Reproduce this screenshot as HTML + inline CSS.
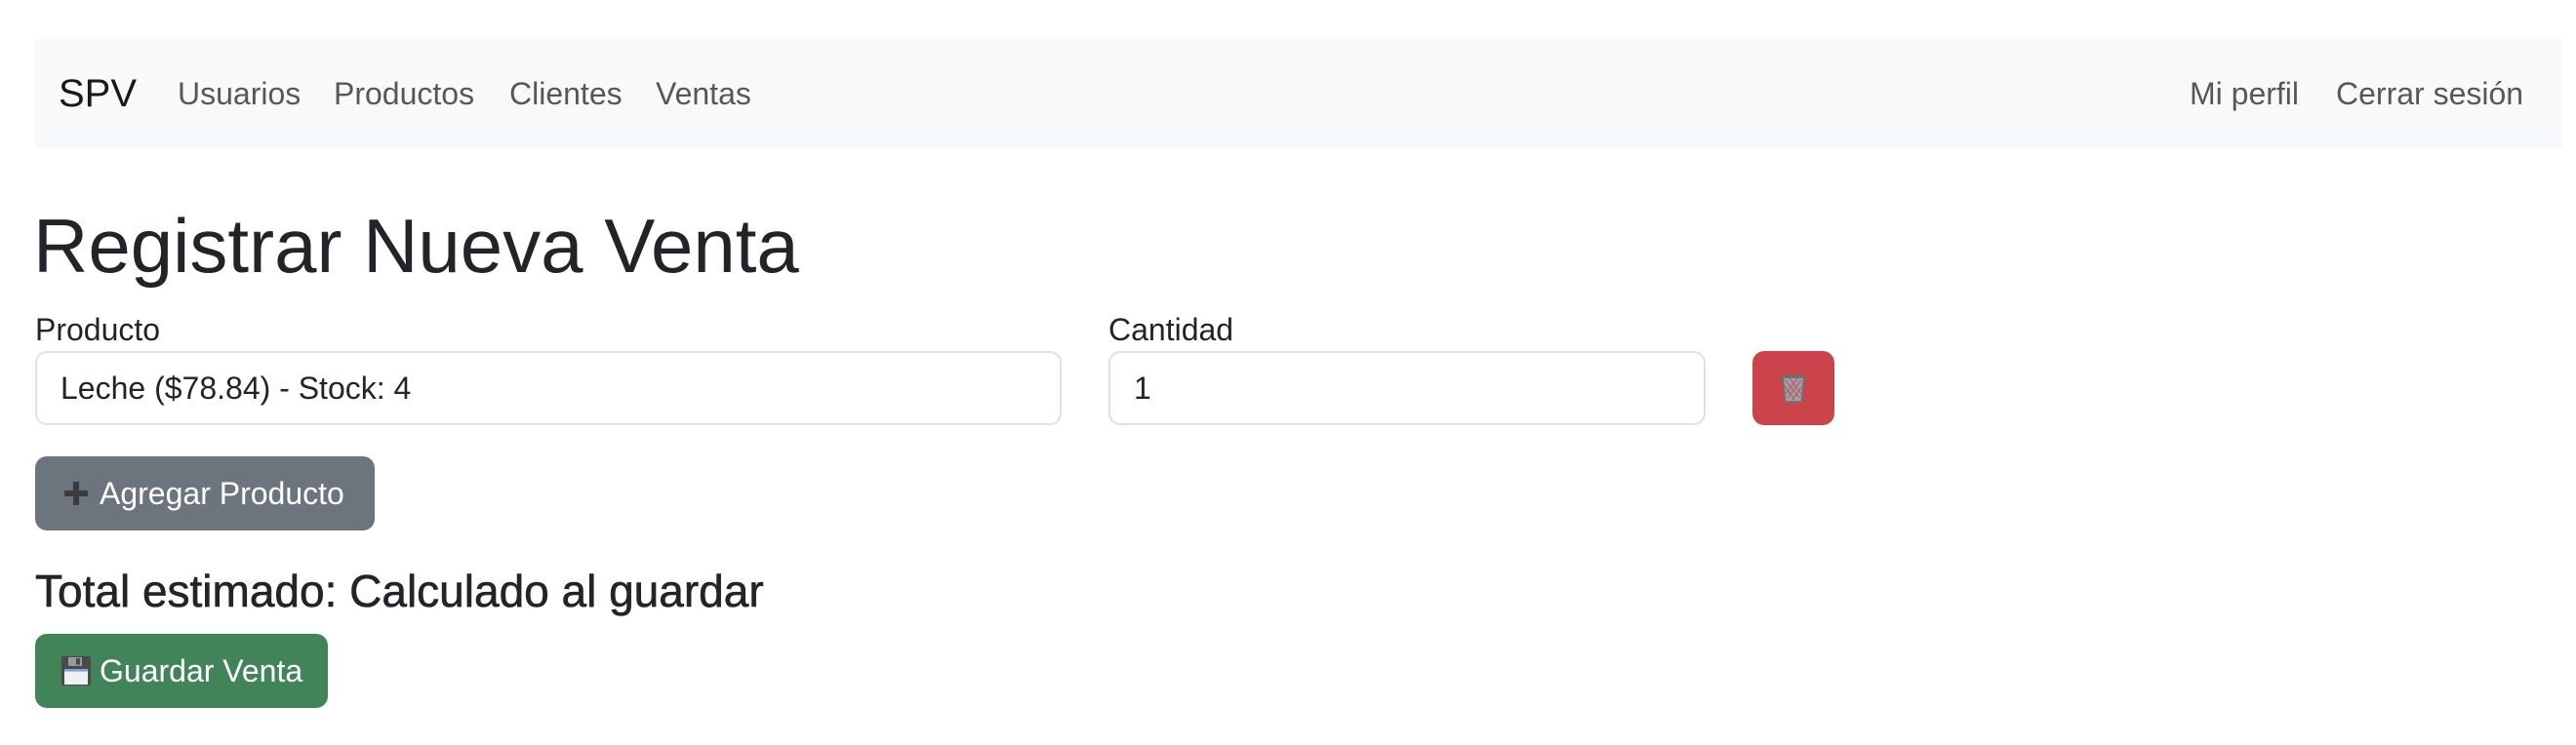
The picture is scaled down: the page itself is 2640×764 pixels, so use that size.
<!DOCTYPE html>
<html><head><meta charset="utf-8"><style>
html,body{margin:0;padding:0;background:#fff}
body{width:1320px;height:382px;zoom:2;position:relative;overflow:hidden;font-family:"Liberation Sans",Arial,sans-serif;color:#212529;font-size:16px}
.a{position:absolute;white-space:nowrap}
.nav{left:18px;top:20px;width:1295px;height:56px;background:#f8f9fa}
.nl{color:rgba(0,0,0,.65);font-size:16px;top:38px;line-height:20px}
.inp{border:1px solid #dee2e6;border-radius:6px;height:36px;box-sizing:content-box;background:#fff;line-height:36px;padding-left:12px;font-size:16px}
.btn{border-radius:6px;color:#fff;height:38px;line-height:38px;font-size:16px}
</style></head><body>
<div class="a nav"></div>
<div class="a" style="left:30px;top:36px;font-size:20px;line-height:24px;color:rgba(0,0,0,.9)">SPV</div>
<div class="a nl" style="left:91px">Usuarios</div>
<div class="a nl" style="left:171px">Productos</div>
<div class="a nl" style="left:261px">Clientes</div>
<div class="a nl" style="left:336px">Ventas</div>
<div class="a nl" style="left:1122px">Mi perfil</div>
<div class="a nl" style="left:1197px">Cerrar sesión</div>

<div class="a" style="left:17px;top:102px;font-size:39px;line-height:48px">Registrar Nueva Venta</div>

<div class="a" style="left:18px;top:159px;line-height:20px">Producto</div>
<div class="a" style="left:568px;top:159px;line-height:20px">Cantidad</div>
<div class="a inp" style="left:18px;top:180px;width:512px">Leche ($78.84) - Stock: 4</div>
<div class="a inp" style="left:568px;top:180px;width:292px">1</div>
<div class="a btn" style="left:898px;top:180px;width:42px;background:#cb444c">
<svg width="42" height="38" viewBox="0 0 42 38"><path d="M15.5 13h11l-1.3 13h-8.4z" fill="#9aa0a6" stroke="#6b6f73" stroke-width="0.8"/><rect x="15" y="12.3" width="12" height="1.6" fill="#6b6f73"/><path d="M17 15l7 9M19 14l6 8M16.5 18l5 7M25 15l-7 9M23 14l-6 8M25.5 18l-5 7" stroke="#c05050" stroke-width="0.5"/></svg></div>

<div class="a btn" style="left:18px;top:234px;width:174px;background:#6c757d">
<svg class="a" style="left:14px;top:12px" width="14" height="14" viewBox="0 0 14 14"><path d="M5.5 1h3v4.5H13v3H8.5V13h-3V8.5H1v-3h4.5z" fill="#3b3b3b"/></svg>
<span class="a" style="left:33px;top:0">Agregar Producto</span></div>

<div class="a" style="left:18px;top:288px;font-size:23px;line-height:30px;-webkit-text-stroke:0.3px #212529">Total estimado: Calculado al guardar</div>

<div class="a btn" style="left:18px;top:325px;width:150px;background:#41845a">
<svg class="a" style="left:13px;top:11px" width="16" height="16" viewBox="0 0 16 16"><rect x="0.5" y="0.5" width="15" height="15" rx="1" fill="#4a4a4a"/><rect x="4" y="1" width="7" height="4.5" fill="#9a9a9a"/><rect x="8" y="1.6" width="2" height="3.2" fill="#4a4a4a"/><rect x="2" y="7" width="12" height="8" fill="#eef0f4"/><rect x="2" y="7" width="12" height="1.3" fill="#7aa3e0"/></svg>
<span class="a" style="left:33px;top:0">Guardar Venta</span></div>
</body></html>
